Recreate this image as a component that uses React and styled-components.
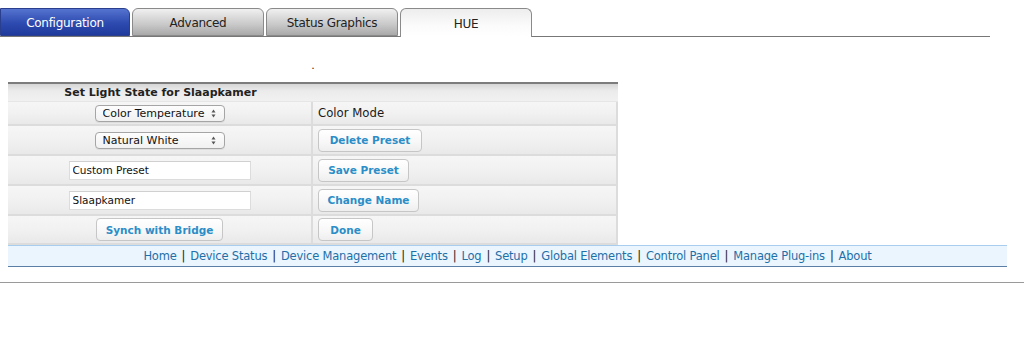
import styled, { createGlobalStyle } from 'styled-components';

const GlobalStyle = createGlobalStyle`
  html, body {
    margin: 0;
    padding: 0;
    background: #fff;
  }
  body {
    font-family: "DejaVu Sans", Verdana, sans-serif;
  }
`;

const Page = styled.div`
  width: 1024px;
  height: 352px;
  padding-top: 8px;
  box-sizing: border-box;
`;

const TabBar = styled.div`
  display: flex;
  align-items: flex-end;
  gap: 2px;
  width: 990px;
  height: 28px;
  border-bottom: 1px solid #777;
  box-sizing: content-box;
`;

const Tab = styled.div`
  width: ${p => (p.$first ? '130px' : '132px')};
  height: ${p => (p.$current ? '29px' : '28px')};
  margin-bottom: ${p => (p.$current ? '-1px' : '0')};
  box-sizing: border-box;
  display: flex;
  align-items: center;
  justify-content: center;
  padding-top: 2px;
  border: 1px solid ${p => (p.$active ? '#2a3f8e' : '#8a8a8a')};
  border-bottom: ${p => (p.$current ? 'none' : undefined)};
  border-radius: ${p => (p.$first ? '0 6px 0 0' : '6px 6px 0 0')};
  background: ${p =>
    p.$active
      ? 'linear-gradient(#5573cf, #2d4ab0 55%, #1f3a9c)'
      : p.$current
      ? 'linear-gradient(#ededed, #fbfbfb 60%, #fff)'
      : 'linear-gradient(#f0f0f0, #c8c8c8 60%, #a9a9a9)'};
  color: ${p => (p.$active ? '#fff' : '#222')};
  font-family: "DejaVu Sans", Verdana, sans-serif;
  font-size: 12px;
  letter-spacing: -0.3px;
`;

const Content = styled.div`
  margin-left: 8px;
`;

const Dot = styled.div`
  width: 610px;
  height: 21px;
  margin-top: 24px;
  text-align: center;
  font-size: 11px;
  line-height: 10px;
  color: #4a2a10;
`;

const Table = styled.div`
  width: 610px;
  border-top: 2px solid #7c7c7c;
  display: grid;
  grid-template-columns: 305px 305px;
  font-family: "DejaVu Sans", "Lucida Grande", sans-serif;
  font-size: 11px;
  color: #222;
`;

const Cell = styled.div`
  height: ${p => p.$h || 30}px;
  box-sizing: border-box;
  display: flex;
  align-items: center;
  justify-content: ${p => (p.$left ? 'flex-start' : 'center')};
  padding-left: ${p => (p.$left ? '5px' : '0')};
  border-bottom: 2px solid #dcdcdc;
  border-right: 2px solid #dcdcdc;
  background: linear-gradient(#f6f6f6, #f1f1f1 50%, #e9e9e9);
`;

const HeadCell = styled(Cell)`
  height: 18px;
  border-right: none;
  border-bottom: 1px solid #e6e6e6;
  font-weight: bold;
  background: linear-gradient(#d6d6d6, #ebebeb 40%, #f1f1f1);
`;

const Label = styled.span`
  font-size: 11.7px;
  color: #1a1a1a;
`;

const SelectWrap = styled.div`
  position: relative;
  width: 130px;
  height: 17px;
`;

const Select = styled.select`
  appearance: none;
  -webkit-appearance: none;
  width: 100%;
  height: 100%;
  box-sizing: border-box;
  border: 1px solid #a5a5a5;
  border-radius: 4px;
  background: linear-gradient(#fdfdfd, #f1f1f1);
  font-family: "DejaVu Sans", "Lucida Grande", sans-serif;
  font-size: 11px;
  color: #111;
  padding: 0 0 0 7px;
  box-shadow: 0 1px 0 rgba(0, 0, 0, 0.06);
`;

const Arrows = styled.svg`
  position: absolute;
  right: 9px;
  top: 4px;
  pointer-events: none;
`;

const TextInput = styled.input`
  width: 182px;
  height: 19px;
  box-sizing: border-box;
  border: 1px solid #dcdcdc;
  border-top-color: #d0d0d0;
  background: #fff;
  font-family: "DejaVu Sans", "Lucida Grande", sans-serif;
  font-size: 10.5px;
  color: #111;
  padding: 0 3px;
  outline: none;
`;

const Button = styled.button`
  height: 23px;
  box-sizing: border-box;
  padding: 0;
  border: 1px solid #c6c6c6;
  border-radius: 4px;
  background: linear-gradient(#ffffff, #f7f7f7 60%, #eeeeee);
  color: #2b8ec8;
  font-family: "DejaVu Sans", "Lucida Grande", sans-serif;
  font-size: 10.5px;
  font-weight: bold;
  white-space: nowrap;
  cursor: pointer;
  width: ${p => p.$w}px;
`;

const Footer = styled.div`
  width: 999px;
  height: 22px;
  box-sizing: border-box;
  display: flex;
  align-items: center;
  justify-content: center;
  background: #eaf5fd;
  border-top: 1px solid #a9cdec;
  border-bottom: 1px solid #5b7ea6;
  font-family: "DejaVu Sans", Verdana, sans-serif;
  font-size: 11.5px;
  letter-spacing: -0.2px;
  color: #111;
`;

const NavLink = styled.a`
  color: #1f6fa9;
  text-decoration: none;
`;

const Sep = styled.span`
  margin: 0 5px;
  color: #222;
`;

const Rule = styled.div`
  width: 1024px;
  height: 1px;
  margin-top: 15px;
  background: #9a9a9a;
`;

const SelectBox = ({ value }) => (
  <SelectWrap>
    <Select defaultValue={value}>
      <option>{value}</option>
    </Select>
    <Arrows width="5" height="9" viewBox="0 0 5 9">
      <path d="M0.5 3.5 L2.5 0.5 L4.5 3.5 Z" fill="#555" />
      <path d="M0.5 5.5 L2.5 8.5 L4.5 5.5 Z" fill="#555" />
    </Arrows>
  </SelectWrap>
);

const tabs = ['Configuration', 'Advanced', 'Status Graphics', 'HUE'];
const links = [
  'Home',
  'Device Status',
  'Device Management',
  'Events',
  'Log',
  'Setup',
  'Global Elements',
  'Control Panel',
  'Manage Plug-ins',
  'About',
];

export default function App() {
  return (
    <Page>
      <GlobalStyle />
      <TabBar>
        {tabs.map((t, i) => (
          <Tab key={t} $first={i === 0} $active={i === 0} $current={t === 'HUE'}>
            {t}
          </Tab>
        ))}
      </TabBar>
      <Content>
        <Dot>.</Dot>
        <Table>
          <HeadCell>Set Light State for Slaapkamer</HeadCell>
          <HeadCell />
          <Cell $h={24}>
            <SelectBox value="Color Temperature" />
          </Cell>
          <Cell $h={24} $left>
            <Label>Color Mode</Label>
          </Cell>
          <Cell>
            <SelectBox value="Natural White" />
          </Cell>
          <Cell $left>
            <Button $w={104}>Delete Preset</Button>
          </Cell>
          <Cell>
            <TextInput defaultValue="Custom Preset" />
          </Cell>
          <Cell $left>
            <Button $w={91}>Save Preset</Button>
          </Cell>
          <Cell>
            <TextInput defaultValue="Slaapkamer" />
          </Cell>
          <Cell $left>
            <Button $w={101}>Change Name</Button>
          </Cell>
          <Cell $h={29}>
            <Button $w={127}>Synch with Bridge</Button>
          </Cell>
          <Cell $h={29} $left>
            <Button $w={55}>Done</Button>
          </Cell>
        </Table>
        <Footer>
          {links.map((l, i) => (
            <span key={l}>
              {i > 0 && <Sep>|</Sep>}
              <NavLink href="#">{l}</NavLink>
            </span>
          ))}
        </Footer>
      </Content>
      <Rule />
    </Page>
  );
}
